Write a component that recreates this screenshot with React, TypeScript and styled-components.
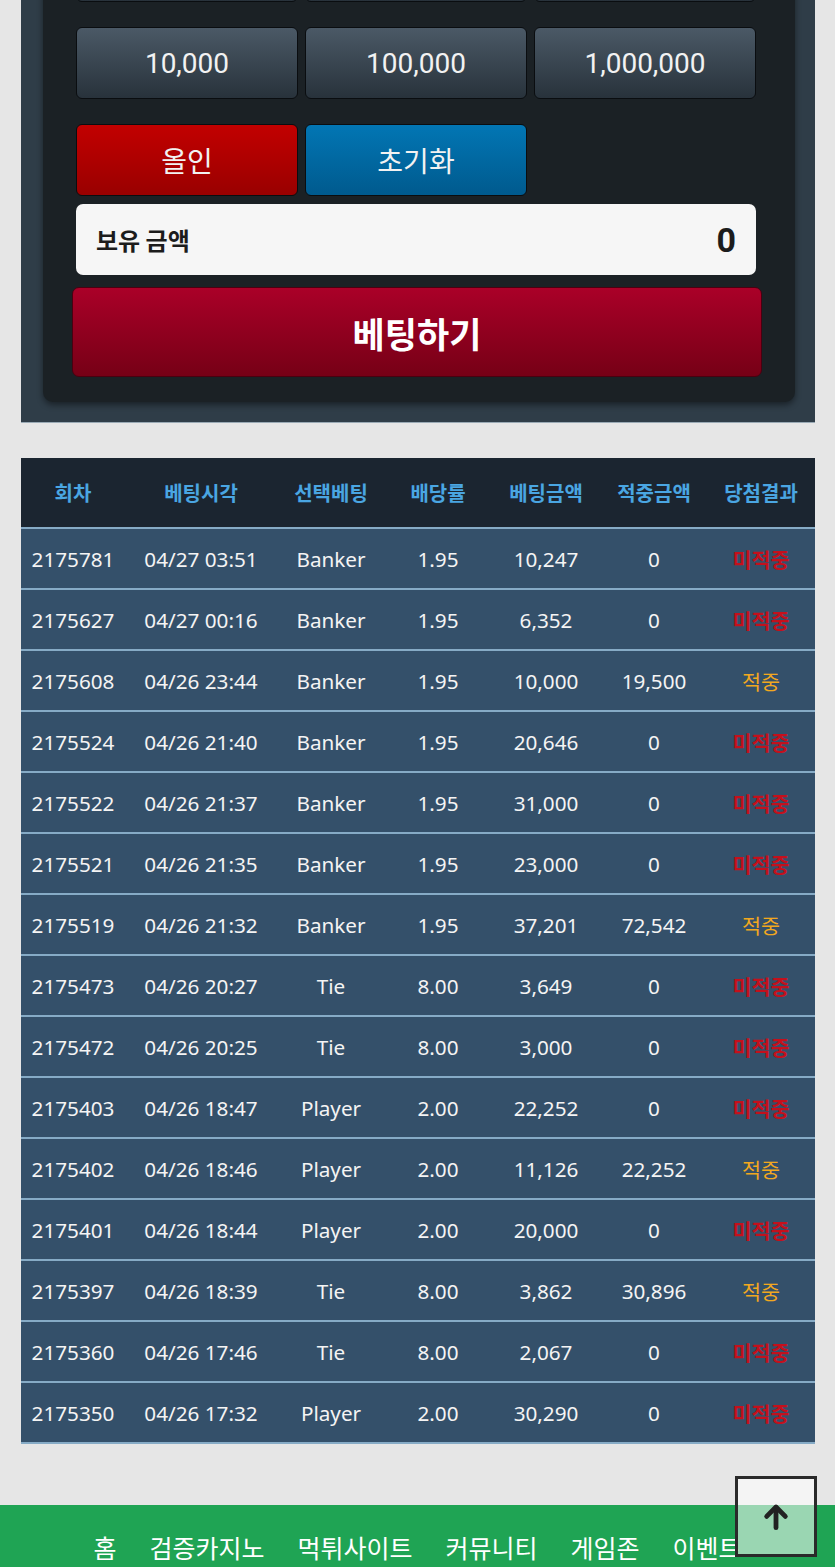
import React from 'react';
import styled, { createGlobalStyle } from 'styled-components';

const GlobalStyle = createGlobalStyle`
  html, body {
    margin: 0;
    padding: 0;
    background: #e6e6e6;
    font-family: "Noto Sans", "Noto Sans CJK KR", sans-serif;
  }
`;

const Page = styled.div`
  display: flex;
  flex-direction: column;
  width: 835px;
  min-height: 1567px;
  overflow: hidden;
  background: #e6e6e6;
`;

const BetPanel = styled.div`
  margin: -98px 20px 0 21px;
  padding: 0 20px 20px 22px;
  background: #2f3d48;
  border-bottom: 1px solid #9aaab5;
`;

const BetBox = styled.div`
  display: flex;
  flex-direction: column;
  padding: 28px 39px 25px 33px;
  background: #1b2125;
  border-radius: 0 0 10px 10px;
  box-shadow: 0 3px 6px rgba(0, 0, 0, 0.45);
`;

const ButtonGrid = styled.div`
  display: grid;
  grid-template-columns: repeat(3, 1fr);
  column-gap: 7px;
  row-gap: 25px;
`;

const ChipButton = styled.button<{ $tone?: 'red' | 'blue' }>`
  height: 72px;
  border: 1px solid #0a0d10;
  border-radius: 6px;
  font-family: Roboto, "Noto Sans CJK KR", sans-serif;
  font-size: 28px;
  color: #f2f2f2;
  background: ${({ $tone }) =>
    $tone === 'red'
      ? 'linear-gradient(#c20000, #990000)'
      : $tone === 'blue'
      ? 'linear-gradient(#0276b4, #005a8e)'
      : 'linear-gradient(#4b5966, #28323b)'};
`;

const BalanceRow = styled.div`
  display: flex;
  align-items: center;
  justify-content: space-between;
  height: 71px;
  margin-top: 8px;
  padding: 0 20px 0 20px;
  background: #f6f6f6;
  border-radius: 7px;
  color: #1c1c1c;
`;

const BalanceLabel = styled.span`
  font-size: 24px;
  font-weight: 700;
  font-family: "Noto Sans CJK KR", sans-serif;
`;

const BalanceValue = styled.span`
  font-size: 34px;
  font-weight: 700;
  font-family: Roboto, sans-serif;
`;

const BetButton = styled.button`
  height: 90px;
  margin: 12px -6px 0 -4px;
  border: 1px solid #4a0010;
  border-radius: 7px;
  background: linear-gradient(#aa0028, #760016);
  color: #fff;
  font-family: "Noto Sans CJK KR", sans-serif;
  font-size: 35px;
  font-weight: 700;
`;

const HistoryTable = styled.table`
  width: 794px;
  margin: 35px 0 0 21px;
  border-collapse: collapse;
  table-layout: fixed;
  background: #34506a;
`;

const HeadCell = styled.th<{ $w: number }>`
  width: ${({ $w }) => $w}px;
  height: 69px;
  padding: 0;
  background: #1b2530;
  color: #4aa6e2;
  font-size: 20px;
  font-weight: 700;
  font-family: "Noto Sans CJK KR", sans-serif;
  text-align: center;
  border-bottom: 2px solid #86abc6;
`;

const Row = styled.tr`
  height: 61px;
  border-bottom: 2px solid #86abc6;
`;

const Cell = styled.td<{ $result?: 'win' | 'lose' }>`
  padding: 0;
  text-align: center;
  font-size: 20.7px;
  font-family: "Noto Sans", "Noto Sans CJK KR", sans-serif;
  color: ${({ $result }) =>
    $result === 'lose' ? '#c4101c' : $result === 'win' ? '#f2a81e' : '#f4f4f4'};
  font-weight: ${({ $result }) => ($result === 'lose' ? 700 : 400)};
`;

const FooterNav = styled.nav`
  display: flex;
  justify-content: center;
  gap: 33px;
  margin-top: 61px;
  padding: 24px 0 30px 0;
  background: #1fa454;
`;

const NavLink = styled.a`
  color: #fff;
  font-size: 25px;
  font-family: "Noto Sans CJK KR", sans-serif;
  text-decoration: none;
`;

const ScrollTop = styled.button`
  position: fixed;
  right: 18px;
  bottom: 10px;
  width: 82px;
  height: 81px;
  display: flex;
  align-items: center;
  justify-content: center;
  padding: 0;
  border: 3px solid #2a2a2a;
  background: rgba(255, 255, 255, 0.55);
  color: #222;
`;

const headers: [string, number][] = [
  ['회차', 104],
  ['베팅시각', 152],
  ['선택베팅', 108],
  ['배당률', 106],
  ['베팅금액', 110],
  ['적중금액', 106],
  ['당첨결과', 108],
];

const bets = [
  { id: '2175781', time: '04/27 03:51', pick: 'Banker', odds: '1.95', amount: '10,247', payout: '0', win: false },
  { id: '2175627', time: '04/27 00:16', pick: 'Banker', odds: '1.95', amount: '6,352', payout: '0', win: false },
  { id: '2175608', time: '04/26 23:44', pick: 'Banker', odds: '1.95', amount: '10,000', payout: '19,500', win: true },
  { id: '2175524', time: '04/26 21:40', pick: 'Banker', odds: '1.95', amount: '20,646', payout: '0', win: false },
  { id: '2175522', time: '04/26 21:37', pick: 'Banker', odds: '1.95', amount: '31,000', payout: '0', win: false },
  { id: '2175521', time: '04/26 21:35', pick: 'Banker', odds: '1.95', amount: '23,000', payout: '0', win: false },
  { id: '2175519', time: '04/26 21:32', pick: 'Banker', odds: '1.95', amount: '37,201', payout: '72,542', win: true },
  { id: '2175473', time: '04/26 20:27', pick: 'Tie', odds: '8.00', amount: '3,649', payout: '0', win: false },
  { id: '2175472', time: '04/26 20:25', pick: 'Tie', odds: '8.00', amount: '3,000', payout: '0', win: false },
  { id: '2175403', time: '04/26 18:47', pick: 'Player', odds: '2.00', amount: '22,252', payout: '0', win: false },
  { id: '2175402', time: '04/26 18:46', pick: 'Player', odds: '2.00', amount: '11,126', payout: '22,252', win: true },
  { id: '2175401', time: '04/26 18:44', pick: 'Player', odds: '2.00', amount: '20,000', payout: '0', win: false },
  { id: '2175397', time: '04/26 18:39', pick: 'Tie', odds: '8.00', amount: '3,862', payout: '30,896', win: true },
  { id: '2175360', time: '04/26 17:46', pick: 'Tie', odds: '8.00', amount: '2,067', payout: '0', win: false },
  { id: '2175350', time: '04/26 17:32', pick: 'Player', odds: '2.00', amount: '30,290', payout: '0', win: false },
];

const chips = ['1,000', '5,000', '50,000', '10,000', '100,000', '1,000,000'];
const menu = ['홈', '검증카지노', '먹튀사이트', '커뮤니티', '게임존', '이벤트'];

const App: React.FC = () => {
  return (
    <Page>
      <GlobalStyle />
      <BetPanel>
        <BetBox>
          <ButtonGrid>
            {chips.map((c) => (
              <ChipButton key={c}>{c}</ChipButton>
            ))}
            <ChipButton $tone="red">올인</ChipButton>
            <ChipButton $tone="blue">초기화</ChipButton>
          </ButtonGrid>
          <BalanceRow>
            <BalanceLabel>보유 금액</BalanceLabel>
            <BalanceValue>0</BalanceValue>
          </BalanceRow>
          <BetButton>베팅하기</BetButton>
        </BetBox>
      </BetPanel>

      {/* 베팅 내역 */}
      <HistoryTable>
        <thead>
          <tr>
            {headers.map(([label, w]) => (
              <HeadCell key={label} $w={w}>
                {label}
              </HeadCell>
            ))}
          </tr>
        </thead>
        <tbody>
          {bets.map((b) => (
            <Row key={b.id}>
              <Cell>{b.id}</Cell>
              <Cell>{b.time}</Cell>
              <Cell>{b.pick}</Cell>
              <Cell>{b.odds}</Cell>
              <Cell>{b.amount}</Cell>
              <Cell>{b.payout}</Cell>
              <Cell $result={b.win ? 'win' : 'lose'}>{b.win ? '적중' : '미적중'}</Cell>
            </Row>
          ))}
        </tbody>
      </HistoryTable>

      <FooterNav>
        {menu.map((m) => (
          <NavLink key={m} href="#">
            {m}
          </NavLink>
        ))}
      </FooterNav>

      <ScrollTop aria-label="맨 위로">
        <svg width="32" height="32" viewBox="0 0 24 24" fill="none" stroke="currentColor" strokeWidth="3.6" strokeLinecap="round" strokeLinejoin="round">
          <path d="M12 20V5" />
          <path d="M5 11.5L12 4.5l7 7" />
        </svg>
      </ScrollTop>
    </Page>
  );
};

export default App;
